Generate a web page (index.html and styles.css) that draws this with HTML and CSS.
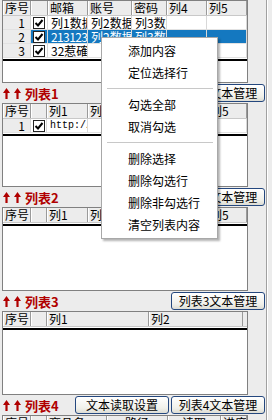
FILE: index.html
```html
<!DOCTYPE html>
<html lang="zh-CN">

<head>
  <meta charset="UTF-8">
  <title>列表管理</title>
  <link rel="stylesheet" href="styles.css">
</head>

<body>
  <div class="window">
    <div class="main">

      <!-- top list -->
      <div class="list list-top cols-main">
        <div class="head">
          <span>序号</span><span></span><span>邮箱</span><span>账号</span><span>密码</span><span>列4</span><span>列5</span>
        </div>
        <div class="row">
          <span class="num">1</span><span class="chk"><i class="box"><svg width="10" height="10" viewBox="0 0 10 10"><path d="M1.5 5 L4 7.5 L8.5 2" fill="none" stroke="#000" stroke-width="2"/></svg></i></span><span>列1数据</span><span>列2数据</span><span>列3数据</span><span></span><span></span>
        </div>
        <div class="row sel">
          <span class="num">2</span><span class="chk"><i class="box"><svg width="10" height="10" viewBox="0 0 10 10"><path d="M1.5 5 L4 7.5 L8.5 2" fill="none" stroke="#000" stroke-width="2"/></svg></i></span><span class="latin">213123</span><span>列2数据</span><span>列3数据</span><span></span><span></span>
        </div>
        <div class="row">
          <span class="num">3</span><span class="chk"><i class="box"><svg width="10" height="10" viewBox="0 0 10 10"><path d="M1.5 5 L4 7.5 L8.5 2" fill="none" stroke="#000" stroke-width="2"/></svg></i></span><span>32惹確</span><span></span><span></span><span></span><span></span>
        </div>
        <div class="end-line"></div>
      </div>

      <div class="title-bar">
        <div class="title">
          <svg class="arrow" width="7" height="11" viewBox="0 0 7 11"><path d="M3.5 0 L7 5 H4.6 V11 H2.4 V5 H0 Z" fill="#b00000"/></svg>
          <svg class="arrow" width="7" height="11" viewBox="0 0 7 11"><path d="M3.5 0 L7 5 H4.6 V11 H2.4 V5 H0 Z" fill="#b00000"/></svg>
          <span>列表1</span>
        </div>
        <div class="btns">
          <button class="btn">列表1文本管理</button>
        </div>
      </div>

      <div class="list cols-five">
        <div class="head">
          <span>序号</span><span></span><span>列1</span><span>列2</span><span>列3</span><span>列4</span><span>列5</span>
        </div>
        <div class="row">
          <span class="num">1</span><span class="chk"><i class="box"><svg width="10" height="10" viewBox="0 0 10 10"><path d="M1.5 5 L4 7.5 L8.5 2" fill="none" stroke="#000" stroke-width="2"/></svg></i></span><span class="mono">http://</span><span></span><span></span><span></span><span></span>
        </div>
        <div class="end-line"></div>
      </div>

      <div class="title-bar">
        <div class="title">
          <svg class="arrow" width="7" height="11" viewBox="0 0 7 11"><path d="M3.5 0 L7 5 H4.6 V11 H2.4 V5 H0 Z" fill="#b00000"/></svg>
          <svg class="arrow" width="7" height="11" viewBox="0 0 7 11"><path d="M3.5 0 L7 5 H4.6 V11 H2.4 V5 H0 Z" fill="#b00000"/></svg>
          <span>列表2</span>
        </div>
        <div class="btns">
          <button class="btn">列表2文本管理</button>
        </div>
      </div>

      <div class="list cols-five">
        <div class="head">
          <span>序号</span><span></span><span>列1</span><span>列2</span><span>列3</span><span>列4</span><span>列5</span>
        </div>
        <div class="end-line"></div>
      </div>

      <div class="title-bar">
        <div class="title">
          <svg class="arrow" width="7" height="11" viewBox="0 0 7 11"><path d="M3.5 0 L7 5 H4.6 V11 H2.4 V5 H0 Z" fill="#b00000"/></svg>
          <svg class="arrow" width="7" height="11" viewBox="0 0 7 11"><path d="M3.5 0 L7 5 H4.6 V11 H2.4 V5 H0 Z" fill="#b00000"/></svg>
          <span>列表3</span>
        </div>
        <div class="btns">
          <button class="btn">列表3文本管理</button>
        </div>
      </div>

      <div class="list cols-two">
        <div class="head">
          <span>序号</span><span></span><span>列1</span><span>列2</span>
        </div>
        <div class="end-line"></div>
      </div>

      <div class="title-bar">
        <div class="title">
          <svg class="arrow" width="7" height="11" viewBox="0 0 7 11"><path d="M3.5 0 L7 5 H4.6 V11 H2.4 V5 H0 Z" fill="#b00000"/></svg>
          <svg class="arrow" width="7" height="11" viewBox="0 0 7 11"><path d="M3.5 0 L7 5 H4.6 V11 H2.4 V5 H0 Z" fill="#b00000"/></svg>
          <span>列表4</span>
        </div>
        <div class="btns">
          <button class="btn">文本读取设置</button>
          <button class="btn">列表4文本管理</button>
        </div>
      </div>

      <div class="list cols-goods">
        <div class="head">
          <span>序号</span><span></span><span>商品名</span><span class="center">路径</span><span class="center">读取</span><span>进度</span>
        </div>
      </div>

    </div>
    <div class="side"></div>

    <div class="menu">
      <div class="menu-item">添加内容</div>
      <div class="menu-item">定位选择行</div>
      <div class="menu-sep"></div>
      <div class="menu-item">勾选全部</div>
      <div class="menu-item">取消勾选</div>
      <div class="menu-sep"></div>
      <div class="menu-item">删除选择</div>
      <div class="menu-item">删除勾选行</div>
      <div class="menu-item">删除非勾选行</div>
      <div class="menu-item">清空列表内容</div>
    </div>
  </div>
</body>

</html>
```

FILE: styles.css
```css
body {
  margin: 0;
  background-color: #ececec;
  font-family: "Noto Sans CJK SC", sans-serif;
  font-size: 12px;
  color: #000;
}

.window {
  position: relative;
  display: flex;
  width: 272px;
  height: 420px;
  overflow: hidden;
}

.main {
  width: 266px;
}

.side {
  width: 5px;
  border-left: 1px solid #a0a0a0;
  box-shadow: inset 1px 0 #fff;
}

/* list views */
.list {
  margin-left: 2px;
  width: 244px;
  height: 82px;
  border: 1px solid #808080;
  background-color: #fff;
  overflow: hidden;
}

.list-top {
  height: 81px;
}

.cols-main {
  --cols: 28px 17px 40px 44px 35px 40px 40px;
}

.cols-five {
  --cols: 28px 16px 41px 40px 40px 40px 39px;
}

.cols-two {
  --cols: 28px 16px 102px 94px;
}

.cols-goods {
  --cols: 28px 16px 60px 61px 53px 26px;
}

.head,
.row {
  display: grid;
  grid-template-columns: var(--cols);
}

.head {
  height: 15px;
  background-color: #ececec;
  border-bottom: 1px solid #c8c8c8;
  box-sizing: border-box;
}

.head span {
  padding: 0 2px;
  line-height: 14px;
  white-space: nowrap;
  overflow: hidden;
  border-right: 1px solid #9a9a9a;
  box-shadow: inset 1px 0 #fff;
}

.head .center {
  text-align: center;
}

.row span {
  height: 14px;
  line-height: 13px;
  padding: 0 3px;
  white-space: nowrap;
  overflow: hidden;
  border-right: 1px solid #d8d8d8;
  border-bottom: 1px solid #e2e2e2;
  box-sizing: border-box;
}

.row .num {
  text-align: right;
  padding-right: 5px;
  background-color: #ececec;
}

.row .chk {
  padding: 0;
  display: flex;
  align-items: center;
  justify-content: center;
}

.box {
  display: flex;
  align-items: center;
  justify-content: center;
  width: 10px;
  height: 10px;
  border: 1px solid #222;
  background-color: #fff;
}

.row.sel span:not(.num) {
  background-color: #1478c0;
  color: #fff;
}

.row .latin {
  letter-spacing: -0.6px;
}

.mono {
  font-family: "Liberation Mono", monospace;
  font-size: 10px;
}

.end-line {
  margin-top: 1px;
  height: 2px;
  background-color: #000;
}

/* title bars */
.title-bar {
  height: 20px;
  display: flex;
  align-items: center;
}

.title {
  display: flex;
  align-items: center;
  gap: 4px;
  padding-left: 3px;
  color: #b00000;
  font-weight: bold;
  font-size: 13px;
}

.btns {
  margin-left: auto;
  margin-right: 1px;
  display: flex;
  gap: 2px;
}

.btn {
  width: 94px;
  height: 18px;
  padding: 0;
  font-family: "Noto Sans CJK SC", sans-serif;
  font-size: 12px;
  line-height: 16px;
  color: #000;
  border: 1px solid #24477e;
  border-radius: 3px;
  background: linear-gradient(#ffffff, #f0f0ea 70%, #dcdcd4);
}

/* context menu */
.menu {
  position: absolute;
  left: 101px;
  top: 37px;
  width: 115px;
  padding: 2px 0;
  background-color: #fff;
  border: 1px solid #a8a8a8;
  box-shadow: 2px 2px 2px rgba(0, 0, 0, 0.3);
}

.menu-item {
  height: 22px;
  line-height: 22px;
  padding-left: 26px;
  white-space: nowrap;
}

.menu-sep {
  height: 1px;
  margin: 4px 4px 5px 5px;
  background-color: #c8c8c8;
}
```
